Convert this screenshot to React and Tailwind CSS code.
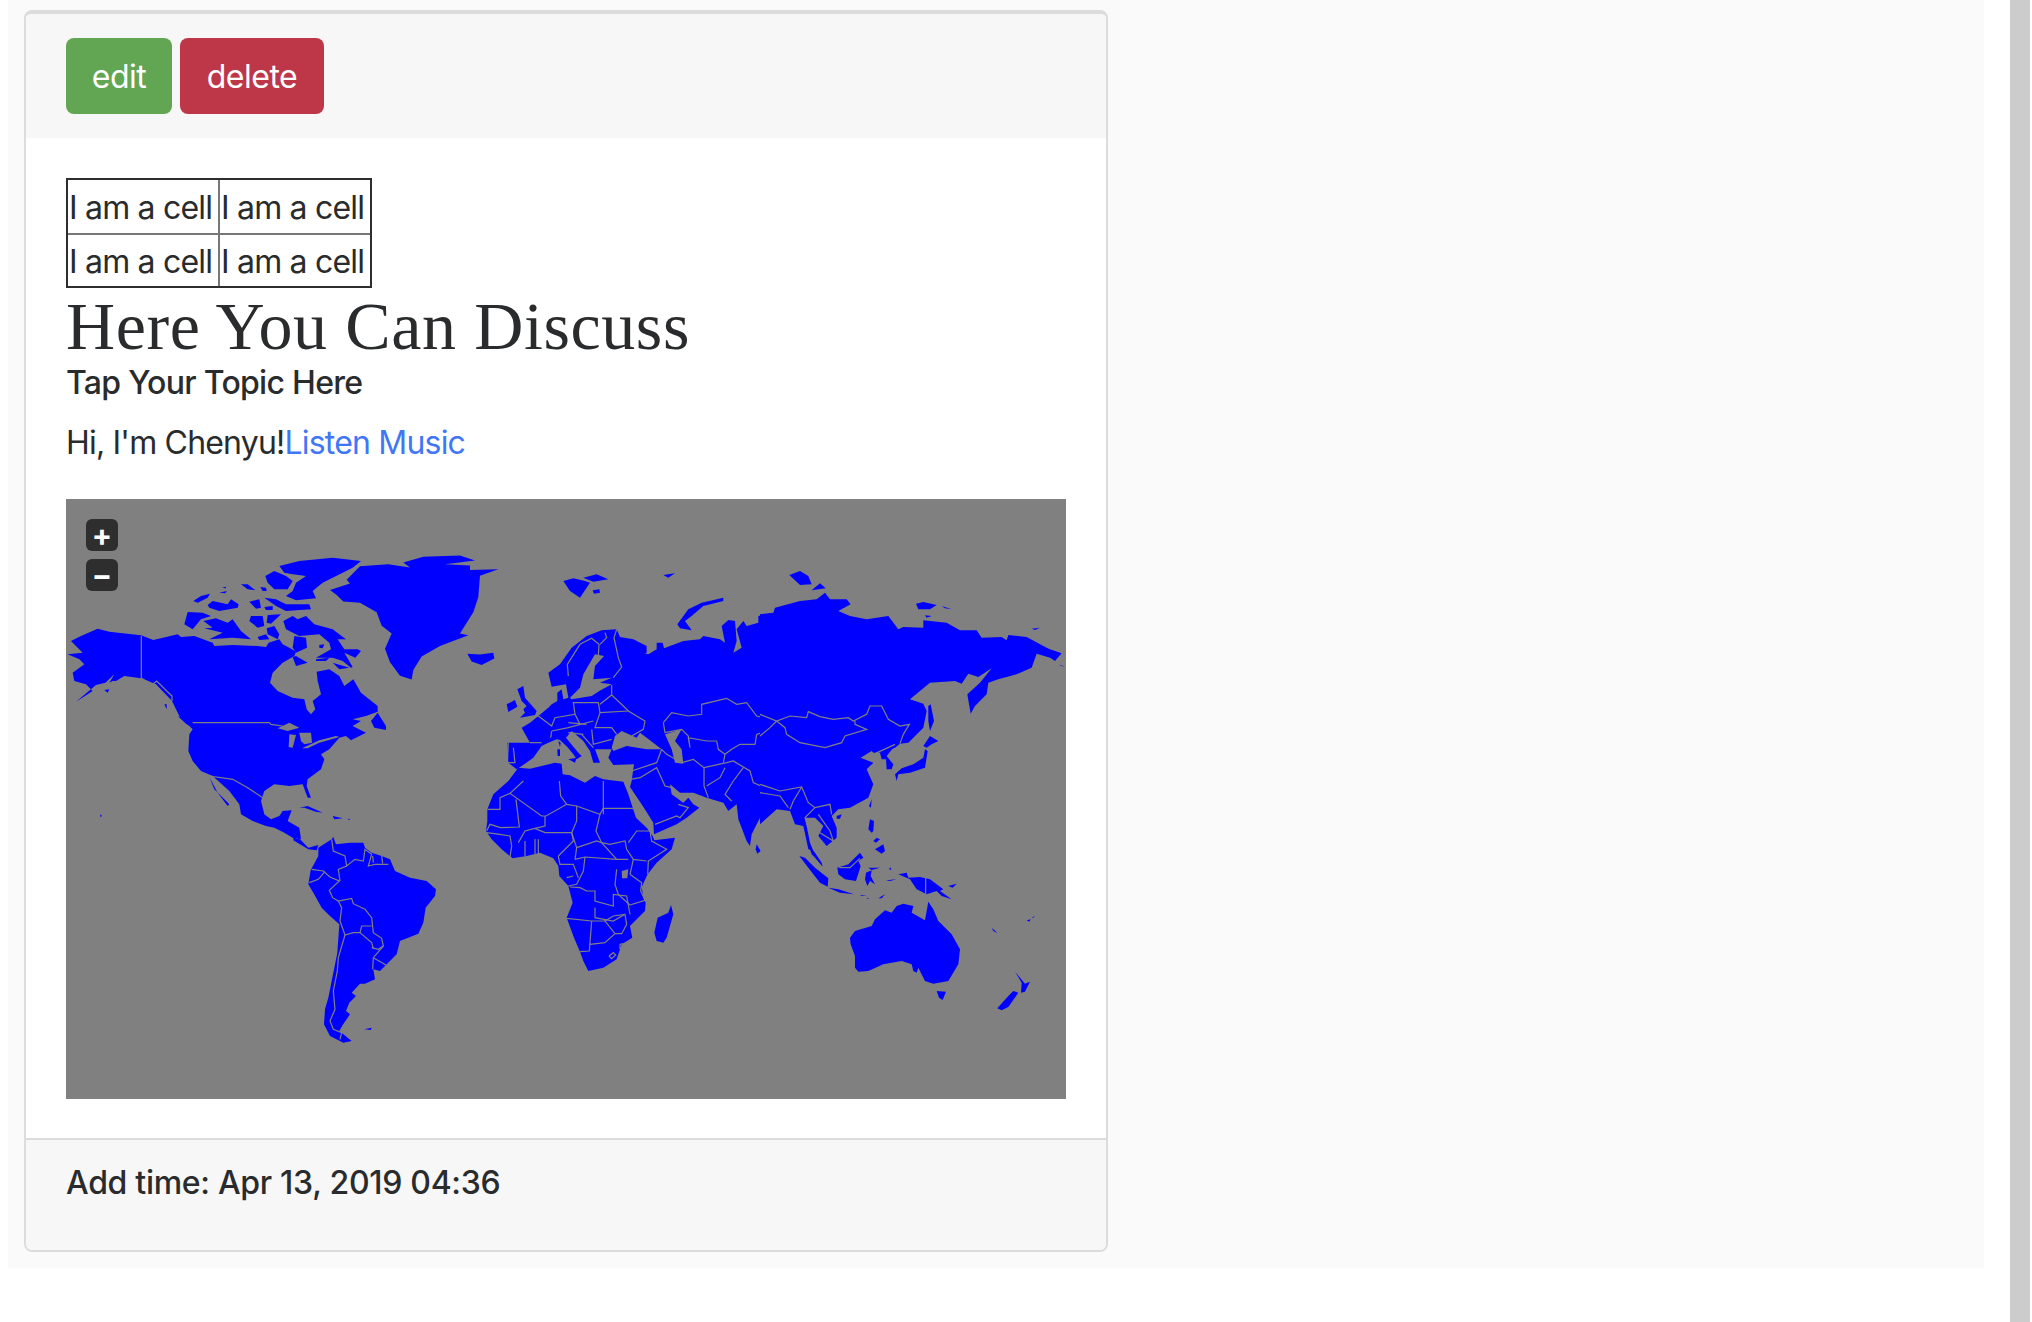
const americas = [
  // alaska, canada, usa, mexico
  '15,300 45,285 95,263 130,272 225,283 262,297 335,280 345,288 385,285 440,305 445,315 500,312 575,315 600,318 608,305 640,295 650,310 670,320 690,332 685,345 650,365 620,395 612,425 635,450 680,470 715,475 722,505 735,520 748,505 740,480 765,460 755,420 752,392 790,385 820,405 835,435 862,415 885,455 935,495 935,512 900,525 860,535 815,565 860,535 885,540 860,555 900,575 855,598 840,585 820,590 790,625 765,640 775,655 765,685 725,715 722,735 735,770 725,770 710,730 670,735 625,730 595,750 585,780 595,820 615,835 640,825 650,810 677,808 665,840 700,860 705,895 680,890 655,875 625,860 600,855 560,840 525,820 520,790 490,750 440,705 405,690 380,660 367,630 370,580 380,565 340,525 318,480 270,430 225,412 175,405 150,420 140,420 130,425 145,400 118,425 90,432 30,482 80,450 60,430 25,420 20,395 55,370 40,355 5,340 50,335',
  '915,540 935,515 960,555 960,567 925,560',
  '430,708 445,745 490,790 485,795 455,755',
  // arctic islands
  '355,250 365,213 410,215 435,225 405,235 380,265',
  '412,240 450,232 485,245 500,235 525,270 555,295 500,290 430,295 470,275 415,262 440,260',
  '382,180 405,165 432,158 425,170 395,185',
  '425,192 440,180 485,190 495,175 518,190 515,200 460,210 430,200',
  '460,155 482,150 478,157',
  '468,140 480,137 480,142',
  '525,130 545,130 568,148 545,145',
  '583,138 600,140 602,150 590,150',
  '550,182 580,175 585,200 570,203',
  '595,198 620,195 620,207 600,207',
  '595,170 630,175 660,190 730,190 735,205 660,210 630,195',
  '555,225 590,225 595,255 575,260 550,240',
  '605,222 645,220 615,248 602,245',
  '602,262 625,255 640,280 635,295 605,280',
  '575,288 600,280 610,295 580,297',
  '652,240 680,225 695,235 720,225 745,250 800,265 840,295 815,295 835,325 875,325 885,330 868,350 835,335 860,378 855,380 830,360 800,350 750,350 795,325 790,305 760,280 700,285 660,265',
  '598,105 625,90 660,105 680,120 665,145 625,145 605,125',
  '640,75 700,60 800,50 885,60 860,80 770,125 740,150 750,172 690,178 660,165 680,150 690,125 720,105 680,100 655,95',
  '680,348 690,345 725,365 690,375',
  '750,355 790,350 780,360 750,360',
  '800,365 850,380 820,385',
  '760,312 775,310 770,322 760,320',
  '685,285 720,290 723,320 690,335 680,320',
  '115,447 130,445 125,455',
  '295,490 302,490 302,505',
  '103,820 108,825 103,828',
  '335,525 360,535 380,560 360,548',
  '700,800 725,795 770,815 750,812 715,800',
  '800,825 830,832 805,835',
  '845,833 855,835 848,836',
]

const lakes = [
  '635,562 670,545 700,560 665,570',
  '670,580 690,582 680,620 668,618',
  '700,575 735,575 738,605 715,610 705,600',
  '708,622 760,598 810,585 820,588 760,605 725,622',
]

const americaBorders = [
  '226,285 226,412 260,430 272,420 318,465 318,480',
  '380,545 610,545 615,550 650,555',
  '430,705 500,715 545,740 590,770',
]

// greenland and iceland were read off a taller crop
const northAtlantic = [
  '1030,160 1090,145 1200,142 1245,155 1155,165 1230,168 1230,180 1315,178 1260,195 1255,250 1240,290 1200,345 1225,350 1140,378 1085,405 1060,440 1055,465 1020,455 990,420 975,385 995,345 965,325 950,290 900,265 850,262 830,245 810,232 870,215 860,205 900,170 985,165 1050,173',
  '1222,398 1260,400 1300,395 1303,410 1265,427 1235,418',
]

const southAmerica = [
  '205,140 245,115 250,108 258,130 300,125 340,125 345,140 365,155 395,165 420,175 435,210 480,230 530,240 558,265 555,285 527,320 520,365 505,398 450,420 440,460 405,495 390,510 370,505 375,535 345,548 330,548 305,575 318,585 298,605 288,630 300,640 278,672 268,690 305,720 280,725 240,705 222,670 225,625 235,590 245,540 262,455 268,370 240,345 215,320 190,275 175,250 182,208 205,165',
  '130,110 150,115 175,140 205,132 200,148 175,145 150,130 130,118',
  '343,685 365,680 362,687',
]

const southAmericaBorders = [
  '245,115 250,150 285,165 290,195 315,175 340,180 345,145 365,160 355,195 375,190 395,190 415,190',
  '368,165 370,185',
  '395,165 398,188',
  '185,205 220,210 240,228 268,240 238,268 248,290 265,300 305,292 310,308 345,325 365,350 370,395 395,412 400,435 385,445 365,440',
  '290,195 265,205 270,240',
  '178,245 205,235 225,212',
  '265,300 275,320 270,360 285,402 310,395 330,395 335,375 365,375',
  '330,395 365,425 370,442',
  '285,402 265,470 262,510 250,570 255,625 240,660 250,685 275,695 270,715',
  '400,435 370,470 368,505',
  '370,470 408,492',
]

const africa = [
  '52,85 70,40 115,0 145,-40 180,-37 255,-55 275,-52 278,-20 300,-17 345,5 375,-15 400,-5 460,2 475,40 498,110 530,140 548,165 553,178 615,170 605,205 560,245 533,280 515,318 520,350 527,365 525,390 480,435 487,470 455,490 440,535 400,560 355,570 340,540 330,512 312,470 290,410 308,365 295,315 268,285 265,255 250,232 210,215 170,225 128,232 95,205 65,175 48,150 52,120',
  '603,372 610,400 590,470 580,485 560,480 553,455 563,410 595,395',
  '860,190 872,210 862,218 857,205',
]

const africaBorders = [
  '52,85 90,85 90,50 120,37 215,105 228,105 290,70 320,75 390,100 400,82 498,82',
  '120,37 160,0',
  '268,0 272,45 290,70',
  '400,0 400,100',
  '138,55 148,138 92,140 60,130 50,150',
  '225,105 225,135 195,142 165,150 145,185',
  '195,142 225,155 305,155 310,180 265,225',
  '320,75 320,120 305,155 320,200 315,235',
  '390,100 378,150 395,185 440,235 475,235',
  '395,185 420,190 465,180 470,205 490,235 530,240',
  '475,185 500,150 540,150 545,180 590,205 535,240 533,280',
  '320,200 380,180 395,185',
  '315,235 345,228 440,235',
  '345,228 340,270 320,310 295,315',
  '300,318 330,320 350,330 375,330 375,360 430,375 430,340 470,345 480,400',
  '290,412 365,420 405,420',
  '375,380 375,410 430,420 465,400',
  '365,420 358,510 330,512',
  '360,490 405,485 435,458 455,458 470,430 465,400 430,405 405,420 435,458',
  '480,280 515,305 512,330 525,358 480,372',
  '490,235 480,280',
  '440,265 435,310 445,340 480,372',
  '50,155 90,160 120,165 125,195 120,228',
  '165,180 165,225',
  '195,175 195,220',
  '205,175 205,220',
  '265,225 270,250 310,250 325,290',
  '290,290 310,285',
  '417,525 430,515 437,522 425,533 417,525',
  '450,490 458,488 458,500 450,502 450,490',
]

const africaLakes = ['455,270 475,265 472,292 456,292']

const europe = [
  '205,395 240,370 275,320 320,285 365,268 410,265 420,288 460,295 500,315 500,335 470,345 470,365 450,345 440,332 490,335 505,340 530,325 530,305 548,305 552,322 610,300 660,295 670,285 720,295 735,305 725,255 745,237 765,240 770,300 760,335 785,320 770,265 790,240 800,255 835,245 835,225 885,215 900,205 900,760 840,830 815,880 810,915 800,900 775,835 770,790 745,810 730,785 680,770 640,755 600,755 570,730 575,760 610,785 625,770 640,790 658,800 620,830 590,850 522,880 520,845 485,790 450,738 455,720 462,670 400,672 385,650 395,625 370,625 345,625 360,665 340,665 330,630 310,600 275,570 258,590 295,635 305,645 290,655 280,640 262,618 240,597 230,595 205,605 185,615 160,650 135,668 110,685 85,665 82,605 150,605 125,560 150,545 175,525 205,500 215,490 232,480 232,455 245,445 250,475 265,470 258,430 215,437',
  '112,445 130,435 135,470 170,510 165,522 120,530 135,515 130,505 140,495 125,480',
  '80,490 105,477 112,497 85,513',
  '265,655 290,650 285,665',
  '232,625 240,625 240,645 233,645',
  '235,600 242,605 240,618',
  '250,120 280,112 315,120 330,125 300,170 270,150',
  '310,110 350,100 385,115 340,122',
  '338,148 358,145 360,155 342,158',
  '550,102 585,97 565,110',
  '592,250 625,205 665,185 730,170 730,180 670,195 635,225 615,240 635,268 600,262',
]

const inlandSeas = [
  '270,470 300,440 310,400 345,340 372,345 345,375 340,415 395,410 360,425 395,430 358,450 335,465 275,475',
  '395,620 405,585 425,570 470,590 480,575 500,590 545,625 500,625 440,615 400,630',
  '555,580 605,565 585,600 605,625 610,668 585,665 575,625',
]

const europeBorders = [
  '410,265 402,290 415,350 425,378 400,410',
  '265,405 262,370 300,310 335,292 357,310 355,345',
  '375,275 380,290 360,310',
  '395,432 395,462 430,495 445,510 495,540 490,565 455,585',
  '360,515 445,510',
  '360,490 395,462',
  '550,545 575,515 625,525 665,520 665,490 740,472 770,490 800,485 830,525 890,540 860,570 830,580 825,610 780,610 755,625 735,640',
  '550,545 555,575 605,565 625,585 630,620 625,590 680,600 710,600 715,625 735,640 730,665',
  '545,625 560,640 605,665 640,655 672,680 740,665 760,660 810,690 820,725 900,760',
  '672,680 672,735 685,770',
  '735,680 720,710 680,735',
  '790,680 760,720 735,760 755,780',
  '455,690 530,665 545,625',
  '480,710 530,680 555,735 575,740',
  '450,715 480,710',
  '525,850 590,825 600,830 625,800 595,790',
  '175,525 215,555 225,530 285,520 280,485 355,485 360,515 345,560 395,560 410,580',
  '215,570 265,560 340,540',
  '265,545 320,550',
  '215,570 212,590',
  '85,605 82,665 105,665 100,620',
  '150,605 185,605',
  '285,520 300,550',
  '335,565 340,610 395,595',
  '305,580 340,620',
  '265,575 310,580',
]

const asia = [
  '0,190 40,185 45,170 120,150 170,145 195,125 210,145 260,145 272,160 235,180 270,195 320,205 385,195 415,235 430,228 490,230 490,208 560,215 600,238 650,238 665,260 725,258 740,268 745,252 800,258 860,290 870,295 905,307 885,330 870,320 830,308 815,350 770,370 715,385 685,395 680,430 645,465 632,488 622,430 660,395 695,352 655,378 625,368 605,398 585,390 510,395 450,445 490,458 500,480 490,530 445,575 420,578 405,590 365,605 340,605 335,600 302,620 340,635 320,655 340,700 325,740 270,770 235,775 215,795 230,830 230,860 200,885 175,855 190,825 165,800 135,800 150,875 160,900 145,895 130,825 105,820 90,780 50,775 0,820',
  '360,605 400,590 380,615 400,640 395,655 380,655 378,625 365,625',
  '505,465 512,460 522,510 510,540 505,510',
  '490,585 510,555 535,570 515,580 500,590',
  '495,595 503,600 495,650 450,665 415,670 410,690 405,670 425,652 460,640 490,620',
  '468,158 490,153 530,162 510,175 475,175',
  '545,165 575,175 555,172',
  '495,193 515,195 500,200',
  '815,233 840,230 825,237',
  '88,72 120,60 145,75 155,100 120,102',
  '155,118 180,97 197,112',
  '895,340 915,347 905,345',
  '230,795 245,790 240,803 230,803',
  '327,765 335,745 333,770',
]

const asiaBorders = [
  '0,490 50,510 90,495 140,500 145,482 180,497 220,505 265,500 280,510 320,490 330,465 365,465 385,505 420,525 448,520 430,550 420,578',
  '50,510 75,530 80,550 120,575 195,590 245,575 255,555 320,535 285,520 285,510',
  '50,510 30,530 0,555',
  '0,700 60,720 125,708 145,755 165,770 210,760 215,790',
  '0,725 60,735 85,770',
  '125,708 100,750 90,775',
  '165,770 135,800 150,850',
  '175,790 210,840 220,870 180,845',
  '340,610 405,580',
]

const oceania = [
  '325,85 330,55 342,60 340,90 335,95',
  '340,120 350,110 360,115 348,125',
  '345,145 370,130 375,150 365,158',
  '118,165 135,170 165,200 205,232 203,257 180,245 145,200',
  '145,130 165,155 185,185 188,197 165,170 155,160',
  '232,200 265,190 300,155 310,170 295,180 302,195 288,240 255,235 235,220',
  '205,260 235,265 282,280 240,275',
  '318,215 335,208 332,225 345,250 330,240 322,255 315,235',
  '415,220 440,215 445,230 480,228 510,235 550,265 540,270 575,295 545,285 530,270 500,280 470,265 450,235',
  '565,255 590,248 578,260',
  '270,410 285,390 335,375 345,355 375,328 395,335 410,315 430,308 460,315 455,335 495,358 505,302 520,325 535,360 575,400 600,445 595,490 565,540 520,548 495,540 475,500 470,515 460,510 455,490 425,480 370,490 325,510 295,512 285,500 285,465 272,430',
  '530,570 558,572 548,597 537,590',
  '765,512 780,530 795,548 810,542 795,572 783,575 785,545',
  '712,622 745,585 760,570 775,575 745,618 725,628',
  '695,380 713,397 700,390',
  '800,358 812,355 808,362',
  '815,350 825,345 820,350',
  '355,292 375,280 365,292',
  '300,282 320,284 305,285',
  '320,290 328,292 322,293',
  '378,238 410,235 390,240',
  '390,198 395,208 388,205',
  '325,200 360,200 335,207',
]

const oceaniaBorders = ['497,230 497,280', '238,200 270,200 300,172']

// each group is traced in the pixels of its own crop, so it gets its own transform
function Region({ transform, land = [], water = [], borders = [] }) {
  return (
    <g transform={transform}>
      {land.map((points) => (
        <polygon key={points} points={points} fill="#0000ff" />
      ))}
      {water.map((points) => (
        <polygon key={points} points={points} fill="#808080" />
      ))}
      {borders.map((points) => (
        <polyline
          key={points}
          points={points}
          fill="none"
          stroke="#808080"
          strokeWidth="1.2"
          vectorEffect="non-scaling-stroke"
        />
      ))}
    </g>
  )
}

function WorldMap() {
  return (
    <div className="relative w-[1000px] h-[600px] bg-[#808080]">
      <svg viewBox="0 0 1000 600" className="block w-full h-full">
        <Region transform="translate(0 42) scale(0.33333)" land={americas} water={lakes} borders={americaBorders} />
        <Region transform="translate(-6 2) scale(0.33333 0.3839)" land={northAtlantic} />
        <Region transform="translate(184 302) scale(0.33333)" land={southAmerica} borders={southAmericaBorders} />
        <Region transform="translate(414 42) scale(0.33333)" land={europe} water={inlandSeas} borders={europeBorders} />
        <Region transform="translate(404 282) scale(0.33333)" land={africa} water={africaLakes} borders={africaBorders} />
        <Region transform="translate(694 52) scale(0.33333)" land={asia} borders={asiaBorders} />
        <Region transform="translate(694 302) scale(0.33333)" land={oceania} borders={oceaniaBorders} />
      </svg>
      <div className="absolute left-5 top-5 w-8 h-8 rounded-md bg-[#2e2e2e] flex items-center justify-center text-white text-[30px] font-bold leading-none">+</div>
      <div className="absolute left-5 top-[60px] w-8 h-8 rounded-md bg-[#2e2e2e] flex items-center justify-center text-white text-[30px] font-bold leading-none">−</div>
    </div>
  )
}

export default function App() {
  return (
    <div className="flex h-[1322px] bg-white font-['Inter',sans-serif] text-[#292b2c] overflow-hidden">
      <div className="ml-2 w-[1976px] h-[1268px] bg-[#fafafa] pt-[10px] pl-4">
        <div className="w-[1084px] h-[1242px] flex flex-col bg-white border-x-2 border-t-4 border-b-2 border-[#dcdcdc] rounded-lg overflow-hidden">
          {/* Header */}
          <div className="h-[124px] bg-[#f7f7f7] pl-10 pt-6 flex gap-2 items-start shrink-0">
            <button className="w-[106px] h-[76px] pt-[2px] rounded-lg bg-[#62a553] text-white text-[32px] tracking-[-0.5px]">edit</button>
            <button className="w-[144px] h-[76px] pt-[2px] rounded-lg bg-[#bd3748] text-white text-[32px] tracking-[-0.5px]">delete</button>
          </div>

          {/* Body */}
          <div className="flex-1 px-10 pt-10">
            <table className="border-separate border-spacing-0 border-2 border-[#2e2e2e] w-[306px] text-[32px] leading-none tracking-[-0.8px]">
              <tbody>
                <tr>
                  <td className="h-[55px] w-[152px] px-[1px] pt-[2px] border-r-2 border-b-2 border-[#777]">I am a cell</td>
                  <td className="h-[55px] w-[150px] px-[1px] pt-[2px] border-b-2 border-[#777]">I am a cell</td>
                </tr>
                <tr>
                  <td className="h-[51px] px-[1px] pt-[2px] border-r-2 border-[#777]">I am a cell</td>
                  <td className="h-[51px] px-[1px] pt-[2px]">I am a cell</td>
                </tr>
              </tbody>
            </table>
            <h1 className="font-['Liberation_Serif',serif] text-[68px] leading-[76px] tracking-[0.6px] whitespace-nowrap">Here You Can Discuss</h1>
            <h4 className="text-[32px] leading-[36px] font-medium mt-[1px] tracking-[-0.7px]">Tap Your Topic Here</h4>
            <p className="text-[32px] leading-[46px] mt-[19px] tracking-[-0.8px]">
              Hi, I'm Chenyu!<a className="text-[#4177f6]">Listen Music</a>
            </p>
            <div className="mt-[33px]">
              <WorldMap />
            </div>
          </div>

          {/* Footer */}
          <div className="h-[112px] bg-[#f7f7f7] border-t-2 border-[#dcdcdc] pl-10 pt-[23px] shrink-0 text-[32px] font-medium leading-[40px] tracking-[-0.3px]">
            Add time: Apr 13, 2019 04:36
          </div>
        </div>
      </div>
      <div className="w-5 h-full bg-[#cccccc] ml-[26px]" />
    </div>
  )
}
